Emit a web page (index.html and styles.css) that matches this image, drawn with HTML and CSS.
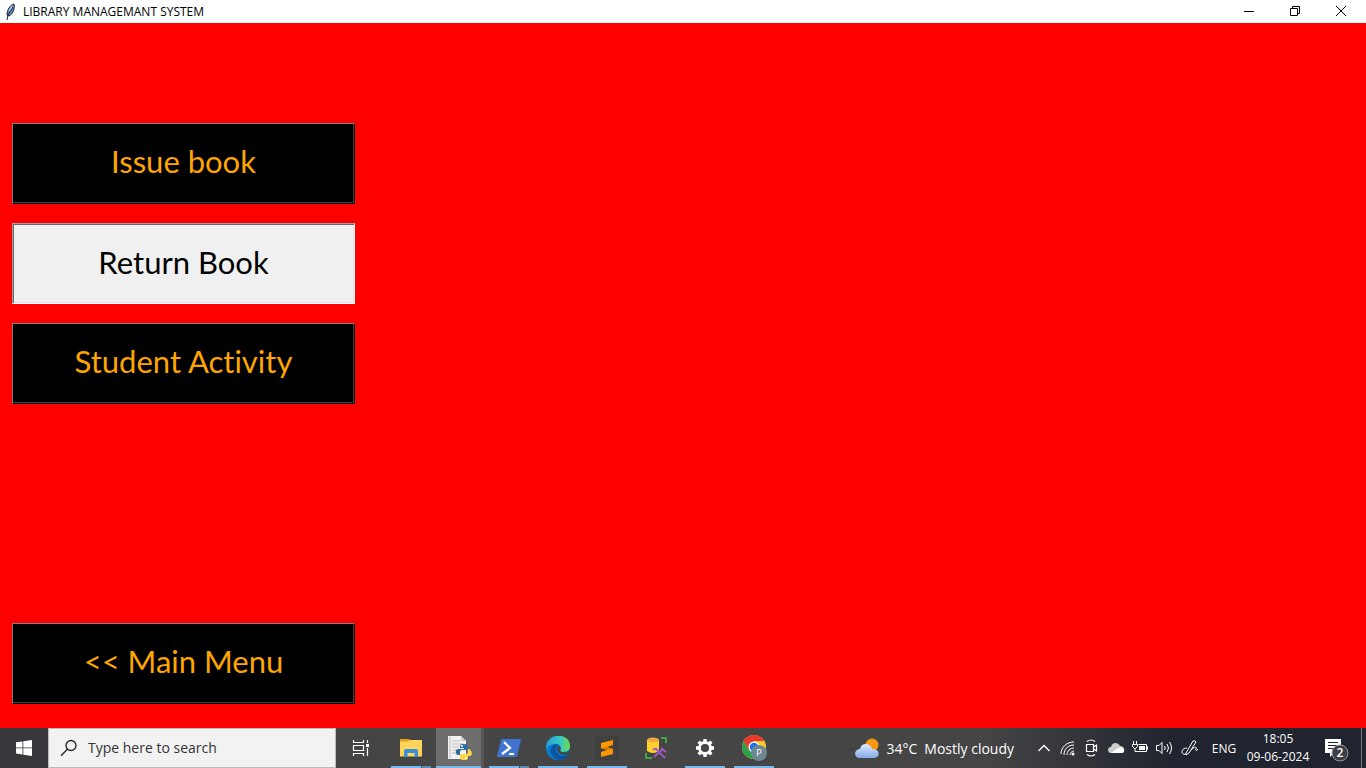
FILE: index.html
```html
<!DOCTYPE html>
<html lang="en">
<head>
<meta charset="utf-8">
<title>LIBRARY MANAGEMANT SYSTEM</title>
<link rel="stylesheet" href="styles.css">
</head>
<body>
<header class="titlebar">
  <svg class="feather" width="16" height="18" viewBox="0 0 16 18"><path d="M12 1C8 2 5 7 5 12l2 1c4-2 6-7 5-12z" fill="#5b8fcf" stroke="#222" stroke-width="1"/><path d="M11 4L6 12l-1 5" fill="none" stroke="#222" stroke-width="1"/><path d="M10 3L7 8" stroke="#b9d8f5" stroke-width="1.300"/></svg>
  <h1 class="title">LIBRARY MANAGEMANT SYSTEM</h1>
  <div class="controls">
    <button class="control" aria-label="Minimize"><svg width="12" height="12" viewBox="0 0 12 12"><path d="M1 6.500h10"/></svg></button>
    <button class="control" aria-label="Restore"><svg width="12" height="12" viewBox="0 0 12 12"><path d="M1.500 3.500h7v7h-7zM3.500 3.500v-2h7v7h-2"/></svg></button>
    <button class="control" aria-label="Close"><svg width="12" height="12" viewBox="0 0 12 12"><path d="M1 1l10 10M11 1L1 11"/></svg></button>
  </div>
</header>

<main class="window">
  <nav class="menu">
    <button class="menu-button">Issue book</button>
    <button class="menu-button pressed">Return Book</button>
    <button class="menu-button">Student Activity</button>
    <button class="menu-button back">&lt;&lt; Main Menu</button>
  </nav>
</main>

<footer class="taskbar">
  <button class="start" aria-label="Start"><svg width="16" height="16" viewBox="0 0 16 16" fill="#fff"><path d="M0 2.300l6.500-.9v6.100H0zM7.300 1.300L16 0v7.500H7.300zM0 8.300h6.500v6.200L0 13.600zM7.300 8.300H16V16l-8.700-1.300z"/></svg></button>
  <label class="search">
    <svg width="18" height="18" viewBox="0 0 18 18" fill="none" stroke="#222" stroke-width="1.300"><circle cx="11" cy="6.500" r="5"/><path d="M7.400 10.300L1 16.700"/></svg>
    <input class="search-input" type="text" placeholder="Type here to search" aria-label="Type here to search">
  </label>
  <button class="app" aria-label="Task View"><svg width="18" height="18" viewBox="0 0 18 18" fill="none" stroke="#fff" stroke-width="1.200"><path d="M1.500 1v2.500h10V1M1.500 17v-2.500h10V17M1.500 6.500h10v5h-10zM15.500 1v3M15.500 9v8"/><path d="M14 5h3v3h-3z" fill="#fff" stroke="none"/></svg></button>
  <div class="apps">
    <button class="app running multiple" aria-label="File Explorer"><svg width="24" height="24" viewBox="0 0 24 24"><path d="M1 3h9l2 2h11v15H1z" fill="#e6a014"/><path d="M1 5.500h8L11 4h12v16.500H1z" fill="#ffd45c"/><path d="M5 21v-6q0-2 2-2h10q2 0 2 2v6h-3.500v-4h-7v4z" fill="#3690d8"/></svg></button>
    <button class="app current" aria-label="Python"><svg width="26" height="26" viewBox="0 0 26 26"><path d="M2 1h13l5 5v18H2z" fill="#f1f1f1"/><path d="M15 1v5h5" fill="#ccc"/><path d="M4 2v21M6 6h8M6 9h12M6 12h7M6 15h5M6 18h6" stroke="#bbb"/><path d="M18 9c-4 0-4 1-4 4h4v1h-6c-3 0-3 6 0 6h2v-3q0-2 2-2h4q2 0 2-2v-2q0-2-4-2z" fill="#2f6c9e"/><path d="M22 14v3q0 2-2 2h-4q-2 0-2 2v2q0 2 4 2c4 0 4-1 4-3v-1h2c3 0 2-7-2-7z" fill="#ffd848"/><circle cx="16" cy="11" r="1" fill="#fff"/><circle cx="20" cy="23" r="1" fill="#fff"/></svg></button>
    <button class="app running multiple" aria-label="PowerShell"><svg width="24" height="24" viewBox="0 0 24 24"><path d="M5 3h18q1 0 1 1l-4 16q0 1-1 1H1q-1 0-1-1L4 4q0-1 1-1z" fill="#3f74cf"/><path d="M7 6l6 6-8 6M12 18h5" fill="none" stroke="#fff" stroke-width="2.200"/></svg></button>
    <button class="app running" aria-label="Microsoft Edge"><svg width="24" height="24" viewBox="0 0 24 24"><defs><linearGradient id="edge-top"><stop stop-color="#249dd9"/><stop offset=".6" stop-color="#35c9c3"/><stop offset="1" stop-color="#75db48"/></linearGradient></defs><circle cx="12" cy="12" r="12" fill="#087bc9"/><path d="M0 12C0-4 24-4 24 10c0 6-7 7-10 5 2-2 1-7-4-7C5 8 1 10 0 14z" fill="url(#edge-top)"/><path d="M10 8c-8 2-7 13 3 16 5 0 8-3 10-6-6 4-13 1-13-4 0-3 1-5 3-5z" fill="#0754a4"/><path d="M14 15c3 2 8 2 10-1v3c-5 4-13 1-13-4 0-2 1-3 2-3 2 1 2 3 1 5z" fill="#444"/></svg></button>
    <button class="app running" aria-label="Sublime Text"><svg width="24" height="24" viewBox="0 0 24 24"><rect width="24" height="24" rx="2" fill="#404040"/><path d="M6 7l12-3v5l-6 2 6 2v5L6 21v-5l6-2-6-2z" fill="#ff9800"/><path d="M6 12l6-1 6 2-6 1z" fill="#d97c00"/></svg></button>
    <button class="app" aria-label="SQL tools"><svg width="24" height="24" viewBox="0 0 24 24"><path d="M3 4v11q6 4 12 0V4z" fill="#ffd22d"/><ellipse cx="9" cy="4" rx="6" ry="2.500" fill="#f0a642"/><path d="M17 2h5v5M2 17v5h6" fill="none" stroke="#42a647" stroke-width="2"/><path d="M10 21l9-8M13 14l8 8M9 14q3-3 5 1M17 12l5 4" fill="none" stroke="#a255c5" stroke-width="2"/></svg></button>
    <button class="app running" aria-label="Settings"><svg width="20" height="20" viewBox="0 0 20 20" fill="none" stroke="#fff"><circle cx="10" cy="10" r="5.500" stroke-width="2.800"/><path d="M10 1v3M10 16v3M1 10h3M16 10h3M3.600 3.600l2.200 2.200M14.200 14.200l2.200 2.200M16.400 3.600l-2.200 2.200M5.800 14.200l-2.200 2.200" stroke-width="3.400"/></svg></button>
    <button class="app running" aria-label="Google Chrome"><svg width="26" height="26" viewBox="0 0 26 26"><circle cx="13" cy="12" r="12" fill="#ffca28"/><path d="M2.600 6A12 12 0 0 1 23.400 6H13L8 15z" fill="#e8392e"/><path d="M2.600 6l5.200 9L13 18l-1 6A12 12 0 0 1 2.600 6z" fill="#2c9f49"/><circle cx="13" cy="12" r="5.500" fill="#fff"/><circle cx="13" cy="12" r="4.300" fill="#1a73e8"/><circle cx="18" cy="18" r="8" fill="#6e8994"/><text class="profile" x="18" y="21" text-anchor="middle">P</text></svg></button>
  </div>

  <div class="tray">
    <button class="weather"><svg width="26" height="24" viewBox="0 0 26 24"><defs><linearGradient id="cloud" y2="1" x2="0"><stop stop-color="#dceaff"/><stop offset="1" stop-color="#86abe9"/></linearGradient></defs><circle cx="18" cy="9" r="6.500" fill="#f9980e"/><path d="M6 22C-1 22 0 13 6 13c1-7 11-6 12 0 8-1 9 9 2 9z" fill="url(#cloud)"/></svg><span>34°C</span><span class="forecast">Mostly cloudy</span></button>
    <button class="tray-button" aria-label="Show hidden icons"><svg width="18" height="18" viewBox="0 0 18 18"><path d="M3.500 12L9 6.500l5.500 5.500" stroke-width="1.300"/></svg></button>
    <button class="tray-button" aria-label="Wi-Fi"><svg width="18" height="18" viewBox="0 0 18 18"><path d="M2 15C2 8 8 3 15 3M5 16C5 10 9 6 15 6M8 16c0-4 3-7 7-7M11 16c0-2 2-4 4-4"/><circle cx="14" cy="15" r="1.500" fill="#fff" stroke="none"/></svg></button>
    <button class="tray-button" aria-label="Meet Now"><svg width="18" height="18" viewBox="0 0 18 18"><path d="M3.500 5.500h7v7h-7zM10.500 8l3-2v6l-3-2M4 2.500q4-3 8 0M4 15.500q4 3 8 0" stroke-width="1.200"/></svg></button>
    <button class="tray-button" aria-label="OneDrive"><svg width="18" height="18" viewBox="0 0 18 18"><path d="M4 14C0 14 0 8 4 8c1-5 7-5 9-1 5 0 6 7 1 7z" fill="#ccc" stroke="none"/><path d="M4 14l7-5q6-2 6 3 0 2-3 2z" fill="#fff" stroke="none"/></svg></button>
    <button class="tray-button" aria-label="Battery charging"><svg width="18" height="18" viewBox="0 0 18 18"><path d="M7.500 5.500h8v7h-9M16.500 7.500v3M2.500 2v3M5.500 2v3M1.500 5.500h5v2l-2 2h-1l-2-2zM4 9v3.500h3"/><path d="M8 7h6v4H8z" fill="#fff" stroke="none"/></svg></button>
    <button class="tray-button" aria-label="Volume"><svg width="18" height="18" viewBox="0 0 18 18"><path d="M1.500 6.500H4l3-3v11l-3-3H1.500zM9.500 7q1.500 2 0 4M12 5q3 4 0 8M14.500 3q4 6 0 12"/></svg></button>
    <button class="tray-button pen" aria-label="Windows Ink"><svg width="18" height="18" viewBox="0 0 18 18"><path d="M5 14l7-12q2-1 3 1L8 14l-3 2zM6 9c-7 0-6 8-1 6M10 11c4-4 6-3 5-1s1 2 2 0"/></svg></button>
    <button class="language">ENG</button>
    <button class="clock"><span>18:05</span><span>09-06-2024</span></button>
    <button class="notices" aria-label="2 notifications"><svg width="28" height="28" viewBox="0 0 28 28"><path d="M2 5h16v14h-7l-4 4v-4H2z" fill="#fff"/><path d="M5 8.500h10M5 11.500h10M5 14.500h7" stroke="#222630"/><circle cx="17" cy="19" r="8" fill="#3c3f45" stroke="#999"/><text class="count" x="17" y="23" text-anchor="middle">2</text></svg></button>
    <button class="desktop" aria-label="Show desktop"></button>
  </div>
</footer>
</body>
</html>
```
FILE: styles.css
```css
* { box-sizing: border-box; }

body {
  display: flex;
  flex-direction: column;
  min-height: 100vh;
  margin: 0;
  background: #f00;
  font-family: "Segoe UI", "Open Sans", "Noto Sans", sans-serif;
}

button {
  margin: 0;
  padding: 0;
  border: 0;
  background: none;
  color: inherit;
  font: inherit;
}

svg { display: block; flex: none; }

.titlebar {
  display: flex;
  align-items: center;
  height: 23px;
  padding: 0 2px;
  background: #fff;
  color: #000;
}

.title {
  flex: 1;
  margin: 0 0 0 5px;
  font-size: 12px;
  font-weight: 400;
  line-height: 16px;
}

.controls { display: flex; padding-bottom: 2px; }

.control {
  display: flex;
  justify-content: center;
  width: 46px;
  padding: 4px 0;
}

.control svg { fill: none; stroke: #000; }

.window { display: flex; flex: 1; }

.menu {
  display: flex;
  flex-direction: column;
  gap: 19px;
  width: 367px;
  padding: 100px 12px 24px;
}

.menu-button {
  height: 81px;
  padding-bottom: 6px;
  border: 1px solid;
  border-color: #808080 #000 #000 #808080;
  background: #000;
  box-shadow: inset -1px -1px #404040;
  color: #ffa500;
  font-family: Papyrus, Lato, sans-serif;
  font-size: 31px;
  font-variant-ligatures: none;
  line-height: 40px;
}

.pressed {
  padding-bottom: 4px;
  border-color: #a0a0a0 #fff #fff #a0a0a0;
  background: #f0f0f0;
  box-shadow: inset 1px 1px #696969, inset -1px -1px #e3e3e3;
  color: #000;
}

.back { margin-top: auto; }

.taskbar {
  display: flex;
  height: 40px;
  background: linear-gradient(90deg, #36363b, #454545 28%, #454545 72%, #20242e 86%, #20242e);
  color: #fff;
}

.start {
  display: flex;
  align-items: center;
  justify-content: center;
  width: 48px;
}

.search {
  display: flex;
  align-items: center;
  gap: 10px;
  width: 288px;
  padding: 0 11px;
  border: 1px solid #bbb;
  background: #f2f2f2;
}

.search-input {
  flex: 1;
  min-width: 0;
  padding: 0;
  border: 0;
  outline: 0;
  background: none;
  color: #222;
  font: 14px/20px "Segoe UI", "Open Sans", "Noto Sans", sans-serif;
}

.search-input::placeholder { color: #333; opacity: 1; }

.apps { display: flex; padding-left: 1px; }

.app {
  display: flex;
  align-items: center;
  justify-content: center;
  width: 49px;
}

.running {
  background: linear-gradient(#76b9ed, #76b9ed) center bottom / 40px 2px no-repeat;
}

.multiple {
  background: linear-gradient(90deg, #76b9ed 30px, #35516a 30px, #35516a 31px, #5c8db3 31px) center bottom / 40px 2px no-repeat;
}

.current {
  border-right: 3px solid #565656;
  border-left: 1px solid #454545;
  background: linear-gradient(#6d6d6d 38px, #76b9ed 38px);
}

.profile { fill: #fff; font-size: 9px; }

.tray { display: flex; margin-left: auto; }

.weather {
  display: flex;
  align-items: center;
  gap: 6px;
  padding-right: 18px;
  font-size: 14px;
}

.forecast { padding-left: 1px; }

.tray-button {
  display: flex;
  align-items: center;
  justify-content: center;
  width: 24px;
}

.tray-button svg { fill: none; stroke: #fff; }

.pen { width: 28px; }

.language { width: 40px; font-size: 12px; }

.clock {
  display: flex;
  flex-direction: column;
  align-items: center;
  justify-content: center;
  width: 68px;
  font-size: 12px;
  line-height: 18px;
}

.notices {
  display: flex;
  align-items: center;
  justify-content: center;
  width: 49px;
}

.count { fill: #fff; font-size: 12px; font-weight: 600; }

.desktop { width: 5px; border-left: 1px solid #777; }
```
